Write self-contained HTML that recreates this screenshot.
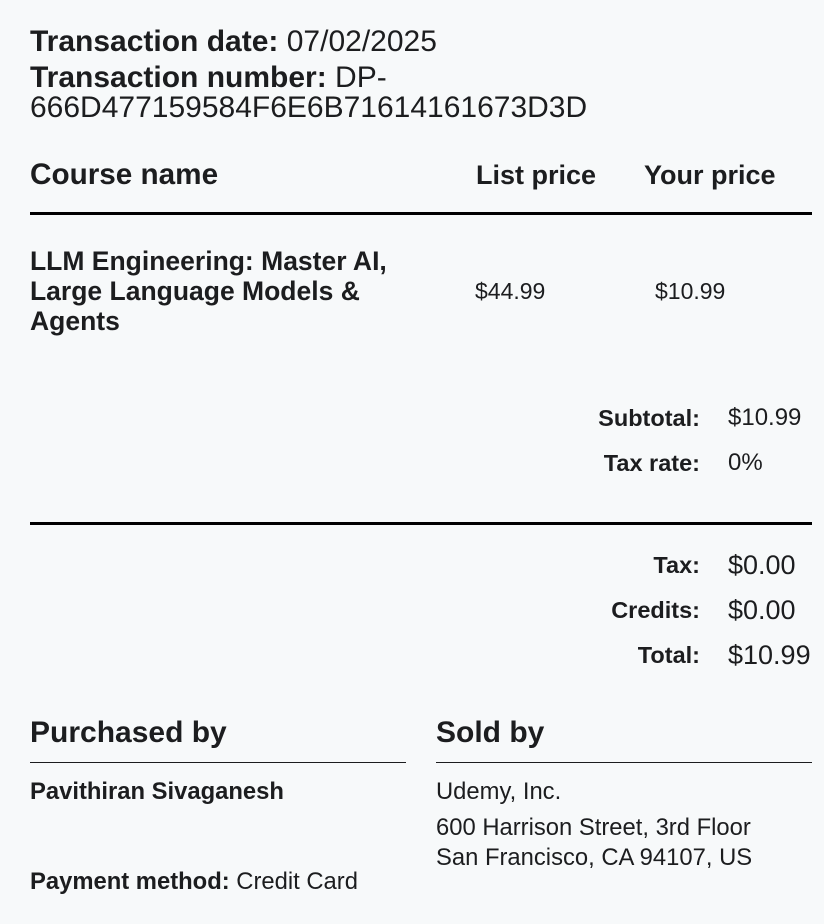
<!DOCTYPE html>
<html><head><meta charset="utf-8"><style>
html,body{margin:0;padding:0}
body{width:824px;height:924px;background:#f7f9fa;color:#1c1d1f;font-family:"Liberation Sans",Arial,sans-serif;position:relative;overflow:hidden}
.a{position:absolute;white-space:nowrap}
b{font-weight:bold}
.r{text-align:right}
.hr{position:absolute;background:#000}
</style></head><body>
<div class="a" style="left:30px;top:25px;font-size:30px;line-height:34px"><b>Transaction date:</b> 07/02/2025</div>
<div class="a" style="left:30px;top:63px;font-size:30px;line-height:30px"><b>Transaction number:</b> DP-<br>666D477159584F6E6B71614161673D3D</div>

<div class="a" style="left:30px;top:158px;font-size:29.7px;line-height:34px;font-weight:bold">Course name</div>
<div class="a" style="left:476px;top:158px;font-size:27px;line-height:34px;font-weight:bold">List price</div>
<div class="a" style="left:644px;top:158px;font-size:27px;line-height:34px;font-weight:bold">Your price</div>
<div class="hr" style="left:30px;top:212px;width:782px;height:3px"></div>

<div class="a" style="left:30px;top:246px;font-size:26.5px;line-height:30px;font-weight:bold">LLM Engineering: Master AI,<br>Large Language Models &amp;<br>Agents</div>
<div class="a" style="left:475px;top:278px;font-size:23px;line-height:26px">$44.99</div>
<div class="a" style="left:655px;top:278px;font-size:23px;line-height:26px">$10.99</div>

<div class="a r" style="right:124px;top:405px;font-size:23.5px;line-height:26px;font-weight:bold">Subtotal:</div>
<div class="a" style="left:728px;top:405px;font-size:24px;line-height:26px">$10.99</div>
<div class="a r" style="right:124px;top:450px;font-size:23.5px;line-height:26px;font-weight:bold">Tax rate:</div>
<div class="a" style="left:728px;top:450px;font-size:24px;line-height:26px">0%</div>
<div class="hr" style="left:30px;top:522px;width:782px;height:3px"></div>

<div class="a r" style="right:124px;top:552px;font-size:23.5px;line-height:26px;font-weight:bold">Tax:</div>
<div class="a" style="left:728px;top:550px;font-size:27px;line-height:30px">$0.00</div>
<div class="a r" style="right:124px;top:597px;font-size:23.5px;line-height:26px;font-weight:bold">Credits:</div>
<div class="a" style="left:728px;top:595px;font-size:27px;line-height:30px">$0.00</div>
<div class="a r" style="right:124px;top:642px;font-size:23.5px;line-height:26px;font-weight:bold">Total:</div>
<div class="a" style="left:728px;top:640px;font-size:27px;line-height:30px">$10.99</div>

<div class="a" style="left:30px;top:716px;font-size:30px;line-height:34px;font-weight:bold">Purchased by</div>
<div class="a" style="left:436px;top:716px;font-size:30px;line-height:34px;font-weight:bold">Sold by</div>
<div class="hr" style="left:30px;top:762px;width:376px;height:1px;background:#1c1d1f"></div>
<div class="hr" style="left:436px;top:762px;width:376px;height:1px;background:#1c1d1f"></div>

<div class="a" style="left:30px;top:779px;font-size:23.8px;line-height:26px;font-weight:bold">Pavithiran Sivaganesh</div>
<div class="a" style="left:436px;top:779px;font-size:23.8px;line-height:26px">Udemy, Inc.</div>
<div class="a" style="left:436px;top:813px;font-size:23.8px;line-height:30px">600 Harrison Street, 3rd Floor<br>San Francisco, CA 94107, US</div>
<div class="a" style="left:30px;top:869px;font-size:23.8px;line-height:26px"><b>Payment method:</b> Credit Card</div>
</body></html>
